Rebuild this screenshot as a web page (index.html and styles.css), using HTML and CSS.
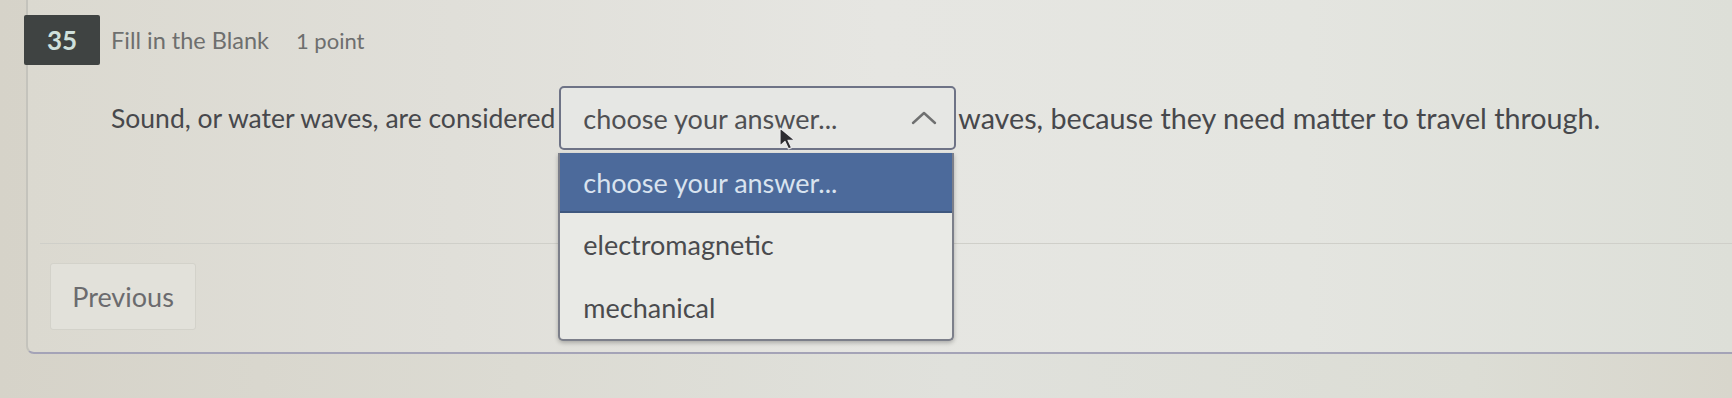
FILE: index.html
```html
<!DOCTYPE html>
<html lang="en">
<head>
<meta charset="utf-8">
<title>Question 35</title>
<link rel="stylesheet" href="styles.css">
</head>
<body>
<div class="page">
  <section class="card">
    <header class="q-head">
      <span class="q-num">35</span>
      <span class="q-type">Fill in the Blank</span>
      <span class="q-points">1 point</span>
    </header>
    <div class="q-body">
      <span class="q-text">Sound, or water waves, are considered</span>
      <div class="select">
        <div class="select-box">
          <span class="select-value">choose your answer...</span>
          <svg class="chevron" width="26" height="14" viewBox="0 0 26 14"><path d="M2 12 L13 2 L24 12" fill="none" stroke="#6f7070" stroke-width="2.4" stroke-linecap="round" stroke-linejoin="round"/></svg>
        </div>
        <svg class="cursor" width="22" height="26" viewBox="0 0 22 26"><path d="M2 2 L2 20 L7 15.5 L10.5 23 L13.5 21.6 L10 14.3 L16.5 14 Z" fill="#2c2c30" stroke="#eaeaea" stroke-width="1.2" stroke-linejoin="round"/></svg>
        <ul class="options">
          <li class="option active">choose your answer...</li>
          <li class="option">electromagnetic</li>
          <li class="option">mechanical</li>
        </ul>
      </div>
      <span class="q-text q-text-after">waves, because they need matter to travel through.</span>
    </div>
    <footer class="q-foot">
      <button class="btn-prev" type="button">Previous</button>
    </footer>
  </section>
</div>
</body>
</html>
```

FILE: styles.css
```css
* { box-sizing: border-box; }

html, body {
  margin: 0;
  padding: 0;
}

body {
  width: 1732px;
  height: 398px;
  overflow: hidden;
  font-family: Lato, "Liberation Sans", sans-serif;
  background: linear-gradient(90deg, #d6d3c9 0%, #dcdbd3 30%, #e0e1dc 55%, #dcddd5 85%, #d8d6cc 100%);
}

.page {
  padding-left: 26px;
}

.card {
  position: relative;
  height: 354px;
  border-left: 2px solid #c4c3bc;
  border-bottom: 2px solid #a4a3b7;
  border-bottom-left-radius: 8px;
  background: linear-gradient(90deg, #dbd9d0 0%, #e0dfd9 25%, #e6e6e2 50%, #e4e5e0 75%, #dddfd8 100%);
}

.q-head {
  display: flex;
  align-items: center;
  padding-top: 15px;
}

.q-num {
  display: flex;
  align-items: center;
  justify-content: center;
  width: 76px;
  height: 50px;
  margin-left: -4px;
  background: #3f4342;
  color: #cfe0dc;
  font-weight: 700;
  font-size: 26px;
  border-radius: 2px;
}

.q-type {
  margin-left: 11px;
  font-size: 23.5px;
  color: #6e6f6e;
}

.q-points {
  margin-left: 27px;
  font-size: 22px;
  color: #6e6f6e;
}

.q-body {
  display: flex;
  align-items: center;
  margin-top: 21px;
  padding-left: 83px;
  font-size: 26.5px;
  color: #47484c;
}

.q-text {
  white-space: nowrap;
}

.q-text-after {
  font-size: 28.7px;
}

.select {
  position: relative;
  flex: none;
  width: 397px;
  margin: 0 2px 0 4px;
}

.select-box {
  display: flex;
  align-items: center;
  height: 64px;
  padding-left: 22px;
  padding-right: 17px;
  border: 2px solid #6e7386;
  border-radius: 5px;
  background: #e6e7e4;
  color: #4f5053;
  font-size: 27px;
}

.select-value {
  white-space: nowrap;
}

.chevron {
  margin-left: auto;
  display: block;
}

.cursor {
  position: absolute;
  left: 219px;
  top: 40px;
  z-index: 3;
}

.options {
  position: absolute;
  z-index: 2;
  top: 67px;
  left: -1px;
  width: 396px;
  margin: 0;
  padding: 0;
  list-style: none;
  background: #e9eae6;
  border: 2px solid #7c7f8a;
  border-top: none;
  border-radius: 0 0 5px 5px;
  box-shadow: 0 2px 4px rgba(0, 0, 0, 0.25);
  font-size: 27px;
  color: #4a4b4e;
}

.option {
  display: flex;
  align-items: center;
  height: 63px;
  padding-left: 23px;
}

.option.active {
  height: 60px;
  background: #4c6a9b;
  border-bottom: 2px solid #3f587f;
  color: #d9e3ef;
}

.q-foot {
  margin-top: 93px;
  margin-left: 12px;
  padding: 19px 0 0 10px;
  border-top: 1px solid #cfcfc9;
}

.btn-prev {
  width: 146px;
  height: 67px;
  border: 1px solid #d3d2ca;
  border-radius: 3px;
  background: #e2e1da;
  font-family: Lato, "Liberation Sans", sans-serif;
  font-size: 27px;
  color: #6b6b6e;
  cursor: pointer;
}
```
